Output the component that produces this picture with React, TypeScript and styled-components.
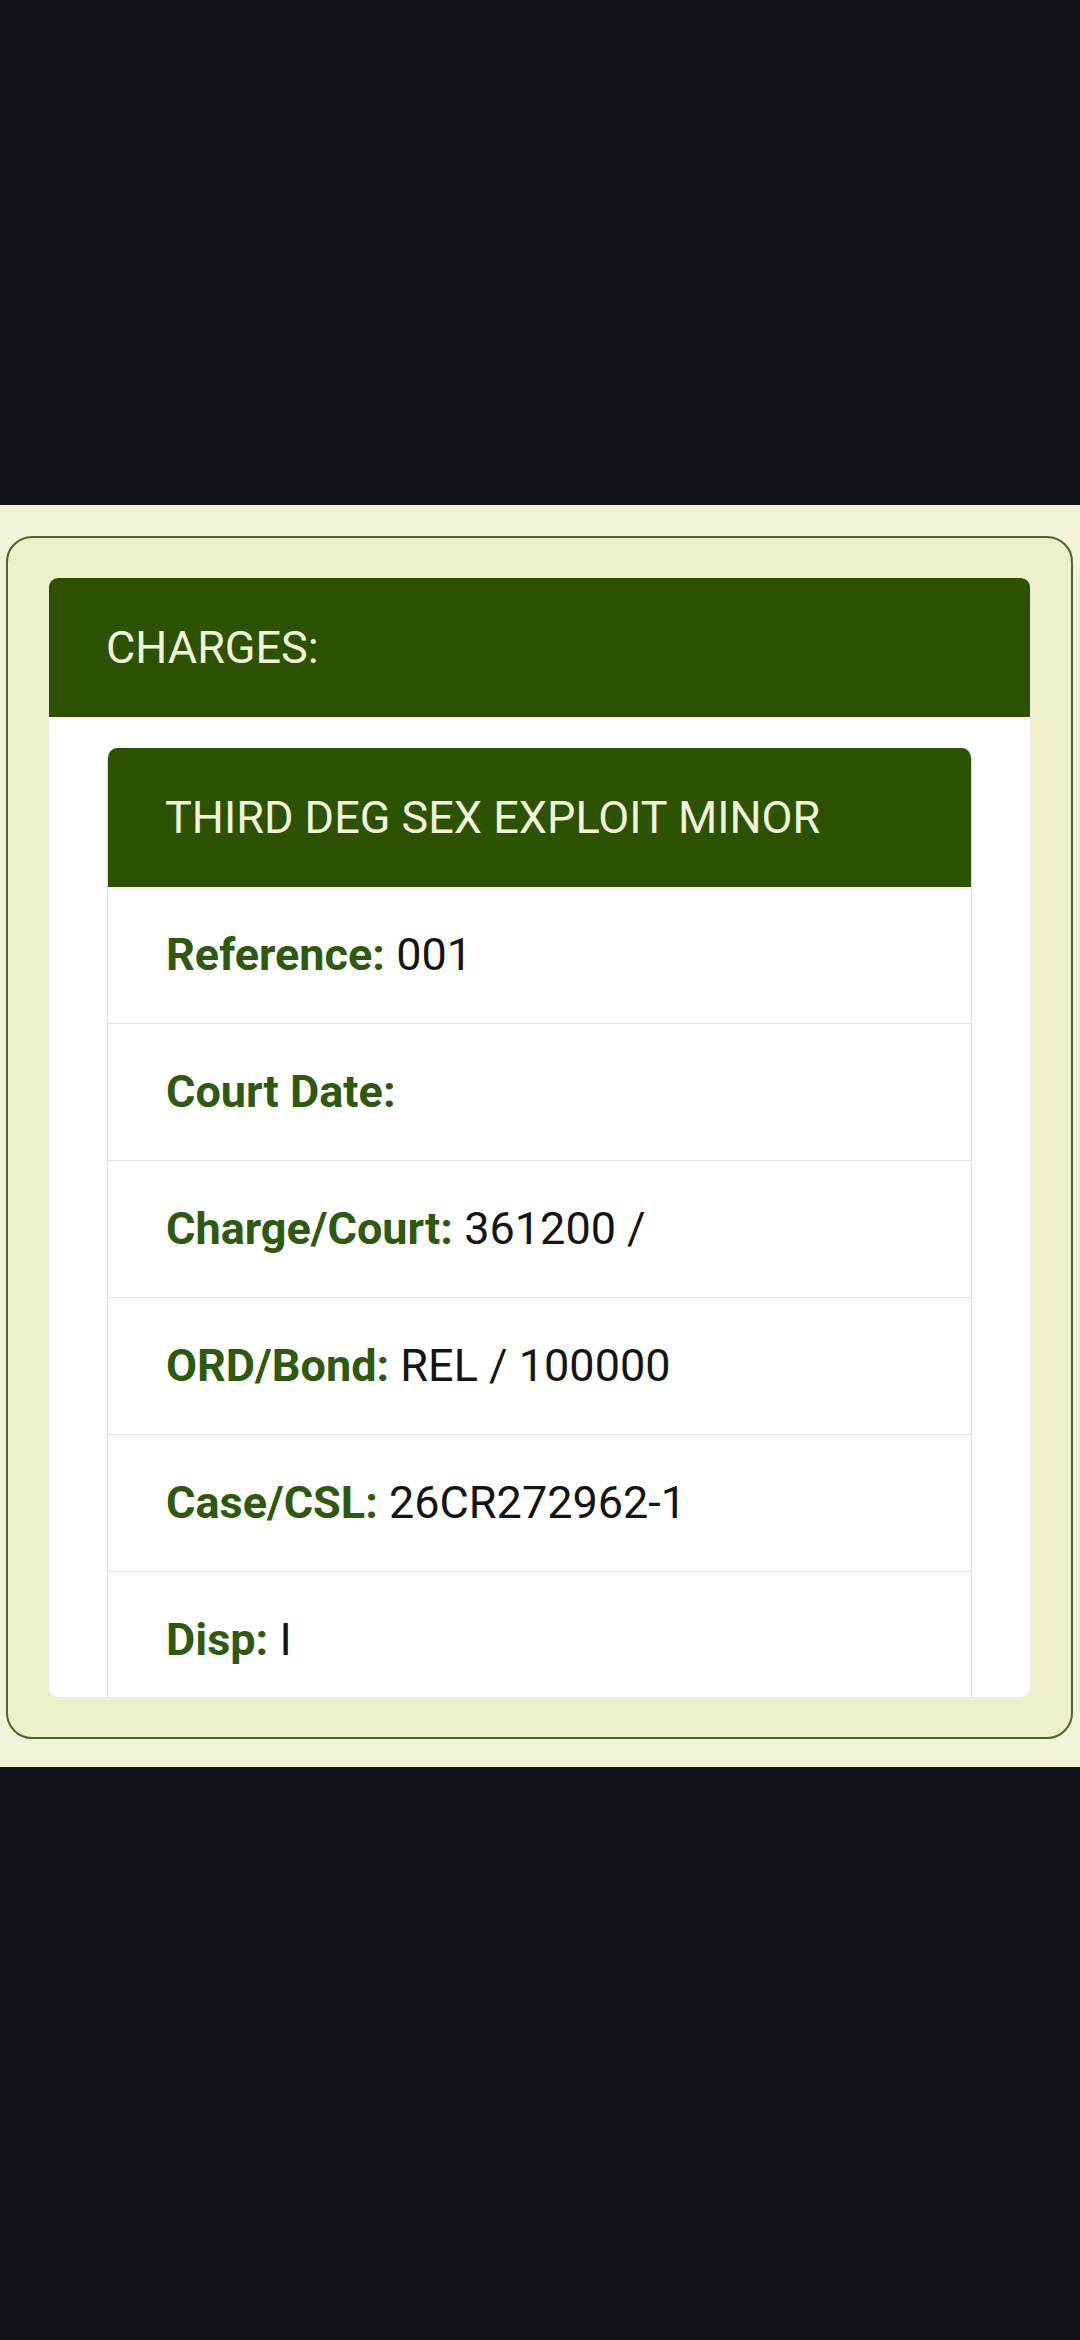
import React from 'react';
import styled, { createGlobalStyle } from 'styled-components';

const GlobalStyle = createGlobalStyle`
  html, body {
    margin: 0;
    padding: 0;
    background: #111318;
    font-family: Roboto, "Noto Sans", "Liberation Sans", sans-serif;
  }
  * {
    box-sizing: border-box;
  }
`;

const Screen = styled.div`
  width: 1080px;
  min-height: 2340px;
  padding-top: 505px;
  background: #111318;
`;

const Panel = styled.section`
  background: #f3f3dc;
  padding: 31px 7px 28px 6px;
`;

const Frame = styled.div`
  border: 2px solid #48672a;
  border-radius: 26px;
  background: #eef0c9;
  padding: 39px 40px;
`;

const Card = styled.div`
  height: 1121px;
  overflow: hidden;
  background: #fff;
  border: 1px solid rgba(0, 0, 0, 0.08);
  border-radius: 10px;
`;

const Header = styled.div`
  background: #2c5200;
  color: #f0f4dc;
  font-size: 45px;
  line-height: 66px;
  padding: 37px 57px 36px;
`;

const CardBody = styled.div`
  padding: 31px 58px 0;
`;

const ChargeCard = styled.div`
  border: 1px solid #dedede;
  border-top: none;
  border-radius: 10px 10px 0 0;
  overflow: hidden;
`;

const Row = styled.div`
  padding: 35px 58px;
  font-size: 45px;
  line-height: 66px;
  color: #141414;
  border-top: 1px solid #e2e2e2;

  &:first-of-type {
    border-top: none;
  }
`;

const Label = styled.span`
  font-weight: 700;
  color: #2e5a10;
`;

const charge = {
  title: 'THIRD DEG SEX EXPLOIT MINOR',
  fields: [
    ['Reference', '001'],
    ['Court Date', ''],
    ['Charge/Court', '361200 /'],
    ['ORD/Bond', 'REL / 100000'],
    ['Case/CSL', '26CR272962-1'],
    ['Disp', 'I'],
  ],
};

const App: React.FC = () => (
  <>
    <GlobalStyle />
    <Screen>
      <Panel>
        <Frame>
          <Card>
            <Header>CHARGES:</Header>
            <CardBody>
              <ChargeCard>
                <Header>{charge.title}</Header>
                <div>
                  {charge.fields.map(([label, value]) => (
                    <Row key={label}>
                      <Label>{label}:</Label> {value}
                    </Row>
                  ))}
                </div>
              </ChargeCard>
            </CardBody>
          </Card>
        </Frame>
      </Panel>
    </Screen>
  </>
);

export default App;
